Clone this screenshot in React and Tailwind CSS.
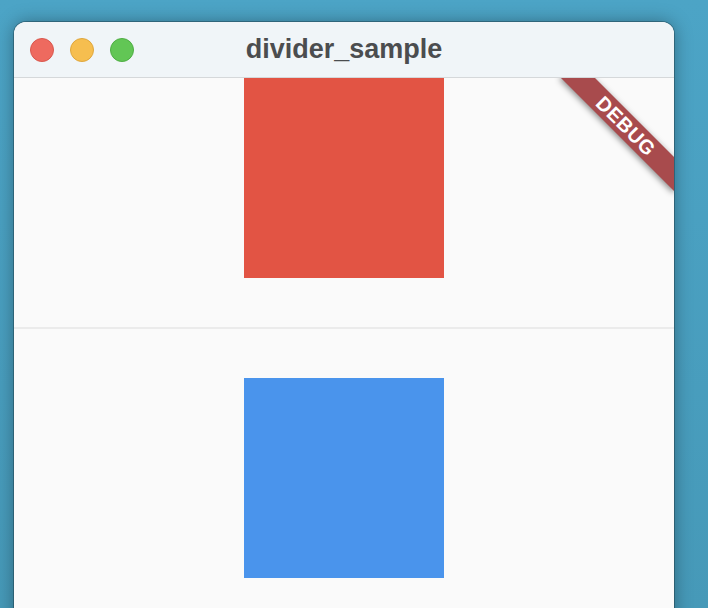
export default function App() {
  return (
    <div className="w-[708px] h-[608px] overflow-hidden bg-linear-to-b from-[#4ca4c6] to-[#4699b8] pt-[22px] pl-[14px]">
      <div className="w-[660px] h-[600px] rounded-t-[12px] overflow-hidden bg-[#fafafa] shadow-[0_0_18px_rgba(0,0,0,0.35)] ring-1 ring-black/25">
        <div className="relative h-[56px] bg-[#f0f5f8] border-b border-[#d5d8da] flex items-center pl-[16px] gap-[16px]">
          <div className="w-[24px] h-[24px] rounded-full bg-[#ee6a5f] border border-[#d9584e]" />
          <div className="w-[24px] h-[24px] rounded-full bg-[#f6be4f] border border-[#dfa73d]" />
          <div className="w-[24px] h-[24px] rounded-full bg-[#62c655] border border-[#4fae44]" />
          <div className="absolute inset-0 flex items-center justify-center pointer-events-none">
            <span className="text-[27px] font-bold text-[#4b4d4f] leading-none" style={{ fontFamily: '"Liberation Sans", Arial, sans-serif' }}>
              divider_sample
            </span>
          </div>
        </div>
        <div className="relative flex flex-col items-center overflow-hidden h-[544px]">
          <div className="w-[200px] h-[200px] shrink-0 bg-[#e25444]" />
          <div className="w-full h-[100px] shrink-0 flex items-center">
            <div className="w-full h-[2px] bg-[#ebebeb]" />
          </div>
          <div className="w-[200px] h-[200px] shrink-0 bg-[#4a94ec]" />
          <div className="absolute left-[532px] top-[36px] w-[160px] h-[24px] rotate-45 bg-[#a84b4d] shadow-[0_2px_6px_rgba(0,0,0,0.45)] flex items-center justify-center">
            <span className="text-white text-[20px] font-bold leading-none tracking-[0.5px]" style={{ fontFamily: '"Liberation Sans", Arial, sans-serif' }}>
              DEBUG
            </span>
          </div>
        </div>
      </div>
    </div>
  );
}
